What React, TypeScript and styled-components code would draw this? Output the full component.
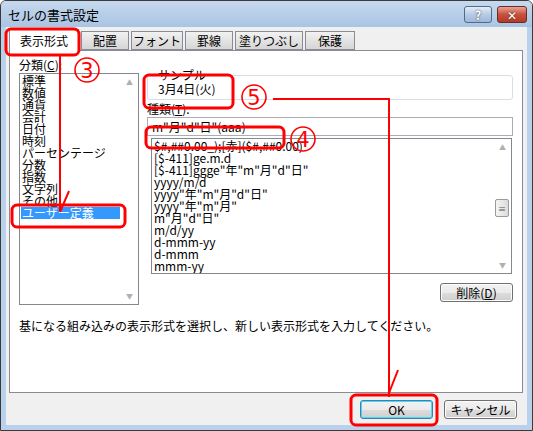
import React from "react";
import styled, { createGlobalStyle } from "styled-components";

const Global = createGlobalStyle`
  html, body { margin: 0; padding: 0; }
  body { font-family: "Noto Sans CJK JP", "DejaVu Sans", sans-serif; font-size: 12px; color: #000; }
  * { box-sizing: border-box; }
`;

const Win = styled.div`
  position: relative;
  width: 533px;
  height: 431px;
  border: 1px solid #3a3a3a;
  border-radius: 6px 6px 0 0;
  background: #b9d1ea;
  display: flex;
  flex-direction: column;
  overflow: hidden;
`;

const TitleBar = styled.div`
  height: 26px;
  display: flex;
  align-items: center;
  padding: 0 5px 0 7px;
  background: linear-gradient(#c6d9ee, #a9c4e3);
  font-size: 13px;
`;

const Title = styled.div`
  flex: 1;
`;

const CapBtn = styled.div<{ $close?: boolean }>`
  width: ${(p) => (p.$close ? 30 : 28)}px;
  height: 17px;
  margin-left: 5px;
  border: 1px solid ${(p) => (p.$close ? "#6b2a22" : "#4f6a8b")};
  border-radius: 3px;
  background: ${(p) =>
    p.$close
      ? "linear-gradient(#e8a596, #c8503d 50%, #b33a26)"
      : "linear-gradient(#e3edf8, #b6cbe4 50%, #9fb8d8)"};
  color: #fff;
  font-weight: bold;
  font-size: 12px;
  display: flex;
  align-items: center;
  justify-content: center;
  text-shadow: 0 0 2px #333;
`;

const Body = styled.div`
  flex: 1;
  margin: 0 5px 5px;
  background: #f0f0f0;
  display: flex;
  flex-direction: column;
  padding: 1px 4px 0 3px;
`;

const Tabs = styled.div`
  display: flex;
  align-items: flex-end;
  height: 22px;
  gap: 2px;
`;

const Tab = styled.div<{ $active?: boolean; $w: number }>`
  width: ${(p) => p.$w}px;
  height: ${(p) => (p.$active ? 22 : 19)}px;
  border: 1px solid #898c95;
  border-bottom: ${(p) => (p.$active ? "none" : "1px solid #898c95")};
  background: ${(p) => (p.$active ? "#fff" : "linear-gradient(#f2f2f2, #e3e3e3 50%, #d6d6d6)")};
  display: flex;
  align-items: center;
  justify-content: center;
  font-size: 12px;
  white-space: nowrap;
  margin-bottom: ${(p) => (p.$active ? -1 : 0)}px;
  position: relative;
`;

const Panel = styled.div`
  height: 343px;
  border: 1px solid #898c95;
  background: #fff;
  padding: 5px 9px 0 9px;
  display: flex;
  flex-direction: column;
`;

const Cols = styled.div`
  display: flex;
  gap: 8px;
`;

const LeftCol = styled.div`
  width: 120px;
  display: flex;
  flex-direction: column;
`;

const Label = styled.div`
  font-size: 12px;
  height: 17px;
  line-height: 17px;
`;

const ListBox = styled.div<{ $h: number }>`
  position: relative;
  height: ${(p) => p.$h}px;
  border: 1px solid #828790;
  display: flex;
`;

const Items = styled.div`
  flex: 1;
  padding: 1px 1px;
  overflow: hidden;
`;

const Item = styled.div<{ $sel?: boolean }>`
  height: 12px;
  line-height: 12px;
  font-size: 12px;
  padding-left: 1px;
  white-space: nowrap;
  background: ${(p) => (p.$sel ? "#3399ff" : "transparent")};
  color: ${(p) => (p.$sel ? "#fff" : "#000")};
`;

const Scroll = styled.div`
  width: 17px;
  display: flex;
  flex-direction: column;
  justify-content: space-between;
  align-items: center;
  background: #fff;
  color: #b0b0b0;
  font-size: 7px;
  padding: 3px 0;
  position: relative;
`;

const Thumb = styled.div`
  position: absolute;
  left: 1px;
  top: 60px;
  width: 14px;
  height: 18px;
  border: 1px solid #9a9a9a;
  border-radius: 2px;
  background: linear-gradient(90deg, #f4f4f4, #dcdcdc);
  color: #555;
  font-size: 8px;
  display: flex;
  align-items: center;
  justify-content: center;
`;

const RightCol = styled.div`
  flex: 1;
  display: flex;
  flex-direction: column;
`;

const SampleBox = styled.fieldset`
  margin: 14px 0 0;
  height: 30px;
  border: 1px solid #d5dfe5;
  border-radius: 3px;
  padding: 0 10px;
  legend {
    padding: 0 2px;
    margin-left: -2px;
    font-size: 12px;
    line-height: 10px;
  }
`;

const SampleText = styled.div`
  font-size: 12px;
  line-height: 16px;
  margin-top: 1px;
`;

const Input = styled.div`
  height: 19px;
  border: 1px solid #abadb3;
  font-size: 12px;
  padding-left: 4px;
  line-height: 17px;
`;

const ListRow = styled.div`
  margin-top: 2px;
  padding: 0 1px 0 4px;
`;

const BtnRow = styled.div`
  display: flex;
  justify-content: flex-end;
  margin-top: 9px;
`;

const Button = styled.div<{ $focus?: boolean }>`
  width: 73px;
  height: 19px;
  border: 1px solid ${(p) => (p.$focus ? "#3c7fb1" : "#707070")};
  border-radius: 3px;
  background: linear-gradient(#f2f2f2, #ebebeb 50%, #dddddd 51%, #cfcfcf);
  box-shadow: ${(p) => (p.$focus ? "inset 0 0 0 1px #48d9f7" : "inset 0 0 0 1px #fcfcfc")};
  display: flex;
  align-items: center;
  justify-content: center;
  font-size: 12px;
`;

const Hint = styled.div`
  margin-top: 12px;
  font-size: 12px;
`;

const Footer = styled.div`
  flex: 1;
  display: flex;
  align-items: center;
  justify-content: flex-end;
  padding-right: 6px;
  gap: 11px;
`;

const Overlay = styled.svg`
  position: absolute;
  left: 0;
  top: 0;
  pointer-events: none;
`;

const Num = styled.text`
  font-family: "DejaVu Sans", sans-serif;
  font-size: 21px;
  fill: #ff0000;
`;

const cats = ["標準", "数値", "通貨", "会計", "日付", "時刻", "パーセンテージ", "分数", "指数", "文字列", "その他", "ユーザー定義"];
const formats = [
  "$#,##0.00_);[赤]($#,##0.00)",
  "[$-411]ge.m.d",
  "[$-411]ggge\"年\"m\"月\"d\"日\"",
  "yyyy/m/d",
  "yyyy\"年\"m\"月\"d\"日\"",
  "yyyy\"年\"m\"月\"",
  "m\"月\"d\"日\"",
  "m/d/yy",
  "d-mmm-yy",
  "d-mmm",
  "mmm-yy",
];

function Circled({ x, y, n }: { x: number; y: number; n: string }) {
  return (
    <g>
      <circle cx={x} cy={y} r={12} fill="none" stroke="#ff0000" strokeWidth={1.6} />
      <Num x={x} y={y + 8} textAnchor="middle">{n}</Num>
    </g>
  );
}

export default function App() {
  return (
    <>
      <Global />
      <Win>
        <TitleBar>
          <Title>セルの書式設定</Title>
          <CapBtn>?</CapBtn>
          <CapBtn $close>✕</CapBtn>
        </TitleBar>
        <Body>
          <Tabs>
            <Tab $active $w={70}>表示形式</Tab>
            <Tab $w={48}>配置</Tab>
            <Tab $w={52}>フォント</Tab>
            <Tab $w={48}>罫線</Tab>
            <Tab $w={68}>塗りつぶし</Tab>
            <Tab $w={50}>保護</Tab>
          </Tabs>
          <Panel>
            <Cols>
              <LeftCol>
                <Label>分類(<u>C</u>):</Label>
                <ListBox $h={232}>
                  <Items>
                    {cats.map((c) => (
                      <Item key={c} $sel={c === "ユーザー定義"}>{c}</Item>
                    ))}
                  </Items>
                  <Scroll>
                    <span>▲</span>
                    <span>▼</span>
                  </Scroll>
                </ListBox>
              </LeftCol>
              <RightCol>
                <SampleBox>
                  <legend>サンプル</legend>
                  <SampleText>3月4日(火)</SampleText>
                </SampleBox>
                <Label>種類(<u>T</u>):</Label>
                <Input>m"月"d"日"(aaa)</Input>
                <ListRow>
                  <ListBox $h={136}>
                    <Items>
                      {formats.map((f) => (
                        <Item key={f}>{f}</Item>
                      ))}
                    </Items>
                    <Scroll>
                      <span>▲</span>
                      <Thumb>≡</Thumb>
                      <span>▼</span>
                    </Scroll>
                  </ListBox>
                </ListRow>
                <BtnRow>
                  <Button>削除(<u>D</u>)</Button>
                </BtnRow>
              </RightCol>
            </Cols>
            <Hint>基になる組み込みの表示形式を選択し、新しい表示形式を入力してください。</Hint>
          </Panel>
          <Footer>
            <Button $focus>OK</Button>
            <Button>キャンセル</Button>
          </Footer>
        </Body>
        <Overlay width={533} height={431}>
          <g fill="none" stroke="#ff0000" strokeWidth={3}>
            <rect x={5} y={28} width={73} height={26} rx={5} />
            <rect x={11} y={204} width={113} height={22} rx={5} />
            <rect x={143} y={74} width={89} height={33} rx={5} />
            <rect x={145} y={126} width={138} height={21} rx={5} />
            <rect x={350} y={394} width={86} height={30} rx={5} />
            <polyline points="59,55 59,210" strokeWidth={2} />
            <polyline points="68,190 59,211" strokeWidth={2} />
            <polyline points="272,98 388,98 388,396" strokeWidth={2} />
            <polyline points="397,369 388,392" strokeWidth={2} />
          </g>
          <Circled x={86} y={69} n="3" />
          <Circled x={253} y={96} n="5" />
          <Circled x={302} y={138} n="4" />
        </Overlay>
      </Win>
    </>
  );
}
